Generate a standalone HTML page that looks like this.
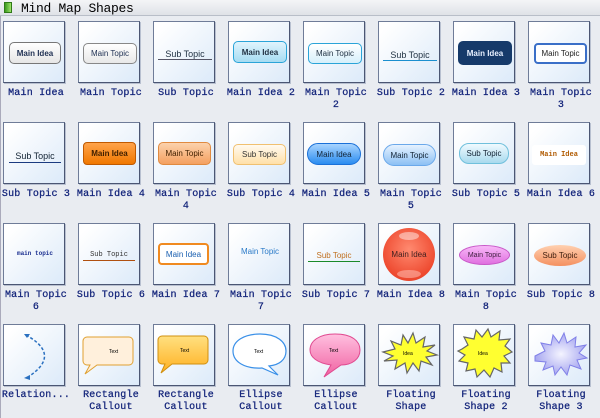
<!DOCTYPE html>
<html><head><meta charset="utf-8"><style>
*{margin:0;padding:0;box-sizing:border-box}
body{width:600px;height:418px;background:#e9ecf1;position:relative;overflow:hidden;font-family:"Liberation Sans",sans-serif}
.hdr{position:absolute;left:0;top:0;width:600px;height:16px;background:linear-gradient(#f4f5f7,#dfe2e7);border-bottom:1px solid #b8bec8}
.hdr i{position:absolute;left:4px;top:2px;width:8px;height:11px;background:linear-gradient(90deg,#3c9a1e,#9ee46a);border:1px solid #2f7a18}
.hdr span{position:absolute;left:21px;top:1px;font:13px "Liberation Mono",monospace;color:#000;letter-spacing:-0.3px}
.vl{position:absolute;left:0;top:16px;width:1px;height:402px;background:#aab}
.t{position:absolute;width:62px;height:62px;border:1px solid #6f7c98;border-right-color:#4b5673;border-bottom-color:#4b5673;background:linear-gradient(135deg,#ffffff 10%,#dceaf9);box-shadow:1px 1px 0 #b8c0d0;overflow:hidden}
.l{position:absolute;width:70px;margin-left:5px;text-align:center;font:10px/12px "Liberation Mono",monospace;letter-spacing:0.2px;color:#12237a;-webkit-text-stroke:0.25px #12237a}
.s{position:absolute;display:flex;align-items:center;justify-content:center;font-size:8px;color:#333;white-space:nowrap}
</style></head><body>
<div class="hdr"><i></i><span>Mind Map Shapes</span></div>
<div class="vl"></div>

<!-- Row 1 -->
<div class="t" style="left:3px;top:21px"><div class="s" style="left:5px;top:20px;width:52px;height:22px;border:1px solid #777;border-radius:5px;background:linear-gradient(#fff,#e6e6e6);font-weight:bold;color:#235">Main Idea</div></div>
<div class="t" style="left:78px;top:21px"><div class="s" style="left:4px;top:21px;width:54px;height:21px;border:1px solid #888;border-radius:5px;background:linear-gradient(#fff,#e8e8e8);color:#235">Main Topic</div></div>
<div class="t" style="left:153px;top:21px"><div class="s" style="left:4px;top:27px;width:54px;height:11px;border-bottom:1px solid #556;font-size:9px;color:#234">Sub Topic</div></div>
<div class="t" style="left:228px;top:21px"><div class="s" style="left:4px;top:19px;width:54px;height:22px;border:1px solid #2aa4d8;border-radius:5px;background:linear-gradient(#e0f4fd,#a6dcf2);font-weight:bold;color:#234">Main Idea</div></div>
<div class="t" style="left:303px;top:21px"><div class="s" style="left:4px;top:21px;width:54px;height:21px;border:1px solid #2aa4d8;border-radius:5px;background:linear-gradient(#fff,#d6f0fb);color:#234">Main Topic</div></div>
<div class="t" style="left:378px;top:21px"><div class="s" style="left:4px;top:27px;width:54px;height:12px;border-bottom:1px solid #1b8fcf;font-size:9px;color:#234">Sub Topic</div></div>
<div class="t" style="left:453px;top:21px"><div class="s" style="left:4px;top:19px;width:54px;height:24px;border-radius:5px;background:#163a6a;font-weight:bold;color:#e8f0ff">Main Idea</div></div>
<div class="t" style="left:528px;top:21px"><div class="s" style="left:5px;top:21px;width:53px;height:21px;border:2px solid #3a6fc8;border-radius:4px;background:#fff;color:#222">Main Topic</div></div>
<div class="l" style="left:-4px;top:88px">Main Idea</div>
<div class="l" style="left:71px;top:88px">Main Topic</div>
<div class="l" style="left:146px;top:88px">Sub Topic</div>
<div class="l" style="left:221px;top:88px">Main Idea 2</div>
<div class="l" style="left:296px;top:88px">Main Topic 2</div>
<div class="l" style="left:371px;top:88px">Sub Topic 2</div>
<div class="l" style="left:446px;top:88px">Main Idea 3</div>
<div class="l" style="left:521px;top:88px">Main Topic 3</div>

<!-- Row 2 -->
<div class="t" style="left:3px;top:122px"><div class="s" style="left:5px;top:26px;width:52px;height:14px;border-bottom:1px solid #1b3b80;font-size:9px;color:#123">Sub Topic</div></div>
<div class="t" style="left:78px;top:122px"><div class="s" style="left:4px;top:19px;width:53px;height:23px;border:1px solid #c05a00;border-radius:4px;background:linear-gradient(#ffa34a,#f07800);font-weight:bold;color:#402000">Main Idea</div></div>
<div class="t" style="left:153px;top:122px"><div class="s" style="left:4px;top:19px;width:53px;height:23px;border:1px solid #e08a40;border-radius:5px;background:linear-gradient(#fcd2ac,#f4a060);color:#402000">Main Topic</div></div>
<div class="t" style="left:228px;top:122px"><div class="s" style="left:4px;top:21px;width:53px;height:21px;border:1px solid #f0c070;border-radius:5px;background:linear-gradient(#fffaf0,#ffe0a8);color:#333">Sub Topic</div></div>
<div class="t" style="left:303px;top:122px"><div class="s" style="left:3px;top:20px;width:54px;height:22px;border:1px solid #1a70d8;border-radius:11px;background:linear-gradient(#a8d4ff,#2a8cf0);color:#123">Main Idea</div></div>
<div class="t" style="left:378px;top:122px"><div class="s" style="left:4px;top:21px;width:53px;height:22px;border:1px solid #6aa8ea;border-radius:11px;background:linear-gradient(#e6f2ff,#8cc0f4);color:#123">Main Topic</div></div>
<div class="t" style="left:453px;top:122px"><div class="s" style="left:5px;top:20px;width:50px;height:21px;border:1px solid #70c0dc;border-radius:10px;background:linear-gradient(#f0faff,#a8daee);color:#123">Sub Topic</div></div>
<div class="t" style="left:528px;top:122px"><div class="s" style="left:3px;top:22px;width:54px;height:20px;background:#fff;border-radius:3px;color:#b05a00;font:bold 7px 'Liberation Mono',monospace">Main Idea</div></div>
<div class="l" style="left:-4px;top:189px">Sub Topic 3</div>
<div class="l" style="left:71px;top:189px">Main Idea 4</div>
<div class="l" style="left:146px;top:189px">Main Topic 4</div>
<div class="l" style="left:221px;top:189px">Sub Topic 4</div>
<div class="l" style="left:296px;top:189px">Main Idea 5</div>
<div class="l" style="left:371px;top:189px">Main Topic 5</div>
<div class="l" style="left:446px;top:189px">Sub Topic 5</div>
<div class="l" style="left:521px;top:189px">Main Idea 6</div>

<!-- Row 3 -->
<div class="t" style="left:3px;top:223px"><div class="s" style="left:4px;top:24px;width:54px;height:10px;color:#1b2f90;font:bold 6px 'Liberation Mono',monospace">main topic</div></div>
<div class="t" style="left:78px;top:223px"><div class="s" style="left:4px;top:25px;width:52px;height:12px;border-bottom:1px solid #b05010;color:#333;font:7px 'Liberation Mono',monospace">Sub Topic</div></div>
<div class="t" style="left:153px;top:223px"><div class="s" style="left:4px;top:19px;width:51px;height:22px;border:2px solid #f08a20;border-radius:4px;background:#fff;color:#1a5fb0">Main Idea</div></div>
<div class="t" style="left:228px;top:223px"><div class="s" style="left:4px;top:20px;width:54px;height:14px;color:#2a7ac8">Main Topic</div></div>
<div class="t" style="left:303px;top:223px"><div class="s" style="left:4px;top:25px;width:52px;height:13px;border-bottom:1px solid #1a8a2a;color:#c07020">Sub Topic</div></div>
<div class="t" style="left:378px;top:223px"><div class="s" style="left:4px;top:4px;width:52px;height:53px;border-radius:50%;background:radial-gradient(circle at 50% 40%,#ff8a70,#ee4a30 70%,#d83a20);color:#402020">Main Idea<div style="position:absolute;left:16px;top:4px;width:20px;height:8px;border-radius:50%;background:rgba(255,255,255,.45)"></div><div style="position:absolute;left:14px;bottom:3px;width:24px;height:8px;border-radius:50%;background:rgba(255,200,190,.5)"></div></div></div>
<div class="t" style="left:453px;top:223px"><div class="s" style="left:5px;top:21px;width:51px;height:20px;border-radius:50%;background:linear-gradient(#f8b8f8,#e070e0);border:1px solid #c858c8;color:#402040;font-size:7px">Main Topic</div></div>
<div class="t" style="left:528px;top:223px"><div class="s" style="left:5px;top:21px;width:52px;height:21px;border-radius:50%;background:linear-gradient(#ffd0b0,#f49060);color:#402010">Sub Topic</div></div>
<div class="l" style="left:-4px;top:290px">Main Topic 6</div>
<div class="l" style="left:71px;top:290px">Sub Topic 6</div>
<div class="l" style="left:146px;top:290px">Main Idea 7</div>
<div class="l" style="left:221px;top:290px">Main Topic 7</div>
<div class="l" style="left:296px;top:290px">Sub Topic 7</div>
<div class="l" style="left:371px;top:290px">Main Idea 8</div>
<div class="l" style="left:446px;top:290px">Main Topic 8</div>
<div class="l" style="left:521px;top:290px">Sub Topic 8</div>

<!-- Row 4 -->
<div class="t" style="left:3px;top:324px"><svg width="62" height="62"><path d="M22 10 Q58 30 24 52" fill="none" stroke="#2a70c0" stroke-width="1.5" stroke-dasharray="3 2"/><path d="M20 9 l6 0 -3 4z" fill="#2a70c0"/><path d="M20 53 l6 -3 0 5z" fill="#2a70c0"/></svg></div>
<div class="t" style="left:78px;top:324px"><svg width="62" height="62"><path d="M8 12 h42 a4 4 0 0 1 4 4 v20 a4 4 0 0 1 -4 4 h-32 l-12 9 l5 -9 h-3 a4 4 0 0 1 -4 -4 v-20 a4 4 0 0 1 4 -4z" fill="#fff0dc" stroke="#e0a030"/><text x="30" y="28" font-size="5" font-family="Liberation Sans">Text</text></svg></div>
<div class="t" style="left:153px;top:324px"><svg width="62" height="62"><defs><linearGradient id="g1" x1="0" y1="0" x2="0" y2="1"><stop offset="0" stop-color="#ffe080"/><stop offset="1" stop-color="#ffb020"/></linearGradient></defs><path d="M8 11 h42 a4 4 0 0 1 4 4 v20 a4 4 0 0 1 -4 4 h-32 l-11 9 l4 -9 h-3 a4 4 0 0 1 -4 -4 v-20 a4 4 0 0 1 4 -4z" fill="url(#g1)" stroke="#d09010"/><text x="26" y="27" font-size="5" font-family="Liberation Sans">Text</text></svg></div>
<div class="t" style="left:228px;top:324px"><svg width="62" height="62"><path d="M31 9 C48 9 57 17 57 26 C57 35 50 40 40 41 L49 50 L33 43 C16 44 4 37 4 26 C4 16 15 9 31 9z" fill="#fff" stroke="#3a90e8" stroke-width="1.2"/><text x="25" y="28" font-size="5" font-family="Liberation Sans">Text</text></svg></div>
<div class="t" style="left:303px;top:324px"><svg width="62" height="62"><defs><linearGradient id="g2" x1="0" y1="0" x2="0" y2="1"><stop offset="0" stop-color="#ffc0e0"/><stop offset="1" stop-color="#f060a0"/></linearGradient></defs><path d="M31 9 C48 9 56 16 56 25 C56 34 48 40 37 40 L20 52 L27 40 C13 38 6 32 6 25 C6 16 15 9 31 9z" fill="url(#g2)" stroke="#e04a90"/><text x="25" y="27" font-size="5" font-family="Liberation Sans">Text</text></svg></div>
<div class="t" style="left:378px;top:324px"><svg width="62" height="62"><path d="M4 27 L16 24 L12 16 L22 20 L24 10 L29 18 L34 8 L37 18 L46 12 L44 22 L56 20 L48 26 L58 30 L47 32 L53 40 L42 36 L40 46 L34 38 L28 48 L26 38 L16 44 L18 35 L5 36 L14 31z" fill="#ffff30" stroke="#666" stroke-width="1.2"/><text x="24" y="30" font-size="5" font-family="Liberation Sans">Idea</text></svg></div>
<div class="t" style="left:453px;top:324px"><svg width="62" height="62"><path d="M8 24 L14 20 L10 12 L20 14 L22 5 L28 12 L34 4 L37 12 L46 6 L45 15 L56 14 L51 21 L58 27 L50 31 L56 38 L47 38 L48 47 L40 43 L36 52 L30 45 L23 52 L21 44 L12 46 L14 38 L5 36 L11 30 L4 26z" fill="#ffff30" stroke="#666" stroke-width="1.2"/><text x="24" y="30" font-size="5" font-family="Liberation Sans">Idea</text></svg></div>
<div class="t" style="left:528px;top:324px"><svg width="62" height="62"><defs><radialGradient id="g3"><stop offset="0" stop-color="#f4f4ff"/><stop offset="1" stop-color="#a8a8f0"/></radialGradient></defs><path d="M6 31 L16 26 L12 18 L22 20 L24 10 L30 18 L35 8 L38 18 L47 12 L46 22 L57 20 L50 28 L58 33 L48 35 L52 44 L41 40 L38 50 L32 42 L26 50 L24 41 L14 45 L17 37 L6 36z" fill="url(#g3)" stroke="#8080e8"/></svg></div>
<div class="l" style="left:-4px;top:390px">Relation...</div>
<div class="l" style="left:71px;top:390px">Rectangle<br>Callout</div>
<div class="l" style="left:146px;top:390px">Rectangle<br>Callout</div>
<div class="l" style="left:221px;top:390px">Ellipse<br>Callout</div>
<div class="l" style="left:296px;top:390px">Ellipse<br>Callout</div>
<div class="l" style="left:371px;top:390px">Floating<br>Shape</div>
<div class="l" style="left:446px;top:390px">Floating<br>Shape 2</div>
<div class="l" style="left:521px;top:390px">Floating<br>Shape 3</div>
</body></html>
